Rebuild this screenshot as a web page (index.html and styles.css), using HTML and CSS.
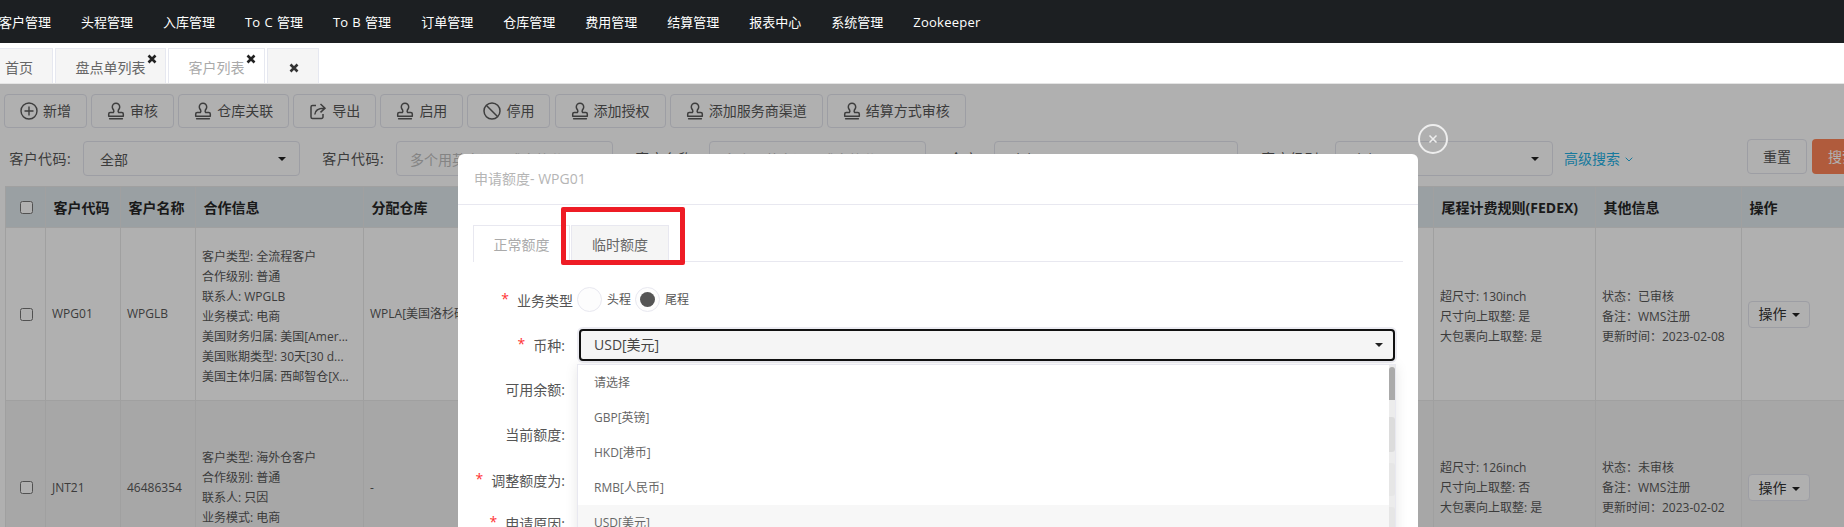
FILE: index.html
```html
<!DOCTYPE html>
<html lang="zh-CN">
<head>
<meta charset="utf-8">
<title>客户列表</title>
<link rel="stylesheet" href="styles.css">
</head>
<body>
<svg class="defs" width="0" height="0" aria-hidden="true">
  <symbol id="stamp" viewBox="0 0 18 18"><path d="M9 1.200a3.700 3.700 0 0 0-3.700 3.700c0 1.500.8 2.300 1.300 3.200.4.800.3 1.700-.2 2.300H3.200c-.9 0-1.500.6-1.500 1.500v2.400h14.600v-2.400c0-.9-.6-1.500-1.500-1.500h-3.200c-.5-.6-.6-1.500-.2-2.300.5-.9 1.300-1.700 1.300-3.200A3.700 3.700 0 0 0 9 1.200zM2.600 16.700h12.800" fill="none" stroke="currentColor" stroke-width="1.500" stroke-linejoin="round" stroke-linecap="round"/></symbol>
  <symbol id="times" viewBox="0 0 10 10"><path d="M1.500 1.500l7 7M8.500 1.500l-7 7" fill="none" stroke="currentColor" stroke-width="2.600"/></symbol>
</svg>

<nav class="nav">
  <a class="nav-item">客户管理</a><a class="nav-item">头程管理</a><a class="nav-item">入库管理</a><a class="nav-item">To C 管理</a><a class="nav-item">To B 管理</a><a class="nav-item">订单管理</a><a class="nav-item">仓库管理</a><a class="nav-item">费用管理</a><a class="nav-item">结算管理</a><a class="nav-item">报表中心</a><a class="nav-item">系统管理</a><a class="nav-item nav-latin">Zookeeper</a>
</nav>

<div class="tabs">
  <div class="tab tab-home">首页</div>
  <div class="tab tab-a">盘点单列表<svg class="tab-x"><use href="#times"/></svg></div>
  <div class="tab tab-b tab-on">客户列表<svg class="tab-x"><use href="#times"/></svg></div>
  <div class="tab tab-c"><svg class="tab-x-solo"><use href="#times"/></svg></div>
</div>

<main class="main">
  <div class="toolbar">
    <button class="btn"><svg class="ico" viewBox="0 0 18 18"><circle cx="9" cy="9" r="8" fill="none" stroke="currentColor" stroke-width="1.400"/><path d="M9 4.500v9M4.500 9h9" stroke="currentColor" stroke-width="1.400"/></svg>新增</button>
    <button class="btn"><svg class="ico"><use href="#stamp"/></svg>审核</button>
    <button class="btn"><svg class="ico"><use href="#stamp"/></svg>仓库关联</button>
    <button class="btn"><svg class="ico" viewBox="0 0 18 18"><path d="M7 3.500H3.500A1.500 1.500 0 0 0 2 5v10a1.500 1.500 0 0 0 1.500 1.500h9A1.500 1.500 0 0 0 14 15v-3M5.800 12.500c.3-4 3-6.300 9.200-6.300M11.500 2l4.500 4.200-4.500 4.200" fill="none" stroke="currentColor" stroke-width="1.500"/></svg>导出</button>
    <button class="btn"><svg class="ico"><use href="#stamp"/></svg>启用</button>
    <button class="btn"><svg class="ico" viewBox="0 0 18 18"><circle cx="9" cy="9" r="8" fill="none" stroke="currentColor" stroke-width="1.500"/><path d="M3.500 3.500l11 11" stroke="currentColor" stroke-width="1.500"/></svg>停用</button>
    <button class="btn"><svg class="ico"><use href="#stamp"/></svg>添加授权</button>
    <button class="btn"><svg class="ico"><use href="#stamp"/></svg>添加服务商渠道</button>
    <button class="btn"><svg class="ico"><use href="#stamp"/></svg>结算方式审核</button>
  </div>

  <div class="filters">
    <label class="f-label">客户代码:</label>
    <div class="control w217"><span>全部</span><i class="caret"></i></div>
    <label class="f-label f-gap">客户代码:</label>
    <div class="control w217 ph"><span>多个用英文逗号或空格分隔</span></div>
    <label class="f-label f-gap">客户名称:</label>
    <div class="control w217 ph"><span>多个用英文逗号或空格分隔</span></div>
    <label class="f-label f-gap f-short">仓库:</label>
    <div class="control w244"><span>全部</span></div>
    <label class="f-label f-gap f-level">客户级别:</label>
    <div class="control w218"><span>全部</span><i class="caret"></i></div>
    <a class="adv">高级搜索<svg class="chev" viewBox="0 0 8 5"><path d="M.7.700L4 4l3.300-3.300" fill="none" stroke="currentColor"/></svg></a>
    <button class="btn-reset">重置</button>
    <button class="btn-search">搜索</button>
  </div>

  <table class="grid">
    <colgroup><col class="c1"><col class="c2"><col class="c3"><col class="c4"><col class="c5"><col class="c6"><col class="c7"><col class="c8"></colgroup>
    <thead>
      <tr><th class="chk"><input type="checkbox"></th><th>客户代码</th><th>客户名称</th><th>合作信息</th><th>分配仓库</th><th>尾程计费规则(FEDEX)</th><th>其他信息</th><th>操作</th></tr>
    </thead>
    <tbody>
      <tr class="row1">
        <td class="chk"><input type="checkbox"></td><td>WPG01</td><td>WPGLB</td>
        <td class="multi">客户类型: 全流程客户<br>合作级别: 普通<br>联系人: WPGLB<br>业务模式: 电商<br>美国财务归属: 美国[Amer...<br>美国账期类型: 30天[30 d...<br>美国主体归属: 西邮智仓[X...</td>
        <td>WPLA[美国洛杉矶仓]</td>
        <td class="multi">超尺寸: 130inch<br>尺寸向上取整: 是<br>大包裹向上取整: 是</td>
        <td class="multi">状态：已审核<br>备注：WMS注册<br>更新时间：2023-02-08</td>
        <td><button class="btn-op">操作<i class="caret"></i></button></td>
      </tr>
      <tr class="row2">
        <td class="chk"><input type="checkbox"></td><td>JNT21</td><td>46486354</td>
        <td>客户类型: 海外仓客户<br>合作级别: 普通<br>联系人: 只因<br>业务模式: 电商</td>
        <td>-</td>
        <td>超尺寸: 126inch<br>尺寸向上取整: 否<br>大包裹向上取整: 是</td>
        <td>状态：未审核<br>备注：WMS注册<br>更新时间：2023-02-02</td>
        <td><button class="btn-op">操作<i class="caret"></i></button></td>
      </tr>
    </tbody>
  </table>
</main>

<div class="backdrop"></div>

<section class="modal">
  <header class="m-head">申请额度- WPG01</header>
  <div class="m-body">
    <div class="m-tabs">
      <div class="m-tab m-tab-on">正常额度</div>
      <div class="m-tab">临时额度</div>
    </div>
    <div class="row row-radio">
      <label class="lab lab-wide"><em>*</em>业务类型</label>
      <span class="radio"></span><span class="radio-text">头程</span>
      <span class="radio radio-on"></span><span class="radio-text">尾程</span>
    </div>
    <div class="row">
      <label class="lab"><em>*</em>币种:</label>
      <div class="select-open">USD[美元]<i class="caret"></i></div>
    </div>
    <div class="row"><label class="lab">可用余额:</label></div>
    <div class="row"><label class="lab">当前额度:</label></div>
    <div class="row"><label class="lab"><em>*</em>调整额度为:</label></div>
    <div class="row row-last"><label class="lab"><em>*</em>申请原因:</label></div>
  </div>
  <div class="drop">
    <ul class="opts">
      <li>请选择</li>
      <li>GBP[英镑]</li>
      <li>HKD[港币]</li>
      <li>RMB[人民币]</li>
      <li class="opt-hi">USD[美元]</li>
    </ul>
    <div class="sbar">
      <div class="sb-thumb"></div>
      <div class="sb-box sb-box1"></div>
      <div class="sb-box sb-box2"></div>
      <div class="sb-box sb-box3"></div>
    </div>
  </div>
  <div class="callout"></div>
</section>

<button class="m-close"><svg viewBox="0 0 10 10"><path d="M1.500 1.500l7 7M8.500 1.500l-7 7" fill="none" stroke="currentColor" stroke-width="1.500"/></svg></button>
</body>
</html>
```
FILE: styles.css
```css
* { box-sizing: border-box; }
html, body { margin: 0; padding: 0; height: 527px; overflow: hidden; }
body { position: relative; background: #fff; color: #575757; font: 14px/20px "Open Sans", "Noto Sans CJK SC", sans-serif; }
.defs { position: absolute; }
button { font: inherit; color: inherit; }

.nav { height: 43px; background: #1c1f22; display: flex; align-items: center; gap: 30px; margin-left: -1px; color: #fff; font-size: 13px; word-spacing: 1px; white-space: nowrap; }
.nav-latin { letter-spacing: .25px; }

.tabs { height: 41px; padding-top: 5px; display: flex; gap: 1.500px; border-bottom: 1px solid #e4e4e4; }
.tab { position: relative; height: 35px; background: #f5f5f5; border: 1px solid #e6e8f0; border-bottom: 0; color: #666; line-height: 37px; white-space: nowrap; }
.tab-home { width: 54px; margin-left: -1px; padding-left: 6px; border-left: 0; }
.tab-a { width: 111.500px; padding-left: 20px; }
.tab-b { width: 97.500px; padding-left: 20px; }
.tab-c { width: 52.500px; }
.tab-on { background: #fff; color: #aaa; }
.tab-x { position: absolute; right: 8px; top: 5px; width: 10px; height: 10px; color: #222; }
.tab-x-solo { position: absolute; left: 21px; top: 14px; width: 10px; height: 10px; color: #333; }

.toolbar { display: flex; gap: 4.100px; padding: 10px 0 0 4px; }
.btn { display: flex; align-items: center; gap: 5px; height: 34px; padding: 0 15px; background: #fff; border: 1px solid #e4e5ee; border-radius: 4px; white-space: nowrap; }
.ico { width: 18px; height: 18px; flex: none; color: #5a5a5a; }

.filters { display: flex; align-items: center; height: 35px; margin-top: 13px; padding-left: 9px; white-space: nowrap; }
.f-label { flex: none; width: 62px; margin-right: 12px; text-align: right; letter-spacing: .4px; }
.f-gap { margin-left: 22px; }
.f-short { width: 34px; }
.f-level { width: 63px; }
.control { position: relative; height: 35px; padding-left: 16px; line-height: 35px; background: #fff; border: 1px solid #e4e5ee; border-radius: 4px; flex: none; }
.w217 { width: 217px; }
.w244 { width: 244px; }
.w218 { width: 218px; }
.ph { padding-left: 13px; color: #c0c0c0; font-size: 14px; }
.caret { display: inline-block; width: 0; height: 0; border: 4px solid transparent; border-top-color: #222; border-bottom: 0; }
.control .caret { position: absolute; right: 13px; top: 15px; }
.adv { margin-left: 11px; color: #22b0e4; }
.chev { width: 8px; height: 5px; margin-left: 5px; vertical-align: 2px; }
.btn-reset { flex: none; width: 60px; height: 35px; margin-left: 114px; margin-top: -4px; background: #fff; border: 1px solid #e4e5ee; border-radius: 4px; }
.btn-search { flex: none; width: 60px; height: 35px; margin-left: 5px; margin-top: -4px; background: #ff8557; border: 0; border-radius: 4px; color: #fff; }

.grid { position: absolute; left: 5px; top: 186px; width: 1839px; table-layout: fixed; border-collapse: collapse; border-top: 1px solid #c6c6c6; font-size: 12px; }
.c1 { width: 40px; } .c2 { width: 75px; } .c3 { width: 75px; } .c4 { width: 168px; } .c5 { width: 1070px; } .c6 { width: 162px; } .c7 { width: 146px; } .c8 { width: 103px; }
.grid th, .grid td { border: 1px solid #e8e8e8; padding: 0 6px; text-align: left; vertical-align: middle; font-weight: 400; white-space: nowrap; overflow: hidden; }
.grid th { height: 41px; padding: 2px 7.500px 0; background: #dfe8ec; color: #262626; font-size: 14px; font-weight: 700; }
.grid td.chk, .grid th.chk { padding: 0 0 0 14px; }
.chk input { display: block; margin: 0; width: 13px; height: 13px; }
.row1 td { height: 173px; background: #fff; }
.row1 td.multi { padding-top: 5px; }
.row2 td { height: 174px; background: #f2f2f2; }
.btn-op { width: 62px; height: 27px; padding: 0; background: #fff; border: 1px solid #e4e5ee; border-radius: 4px; color: #333; font-size: 14px; }
.btn-op .caret { margin-left: 5px; vertical-align: 2px; }

.backdrop { position: absolute; left: 0; right: 0; top: 84px; bottom: 0; background: rgba(0, 0, 0, .31); }

.modal { position: absolute; left: 458px; top: 154px; width: 960px; height: 373px; overflow: hidden; background: #fff; border-radius: 6px 6px 0 0; font-size: 14px; color: #555; }
.m-head { height: 51px; padding-left: 16px; line-height: 50px; border-bottom: 1px solid #e8e8f0; color: #b5b5b5; }
.m-body { padding: 20px 15px 0; }
.m-tabs { display: flex; gap: 1px; height: 37px; border-bottom: 1px solid #e8e8f0; }
.m-tab { width: 98px; height: 37px; text-align: center; line-height: 37px; background: #f5f5f5; border: 1px solid #e8e8f0; border-bottom: 0; color: #666; }
.m-tab-on { width: 97px; background: #fff; color: #aaa; }

.row { display: flex; align-items: center; height: 45px; margin-left: -15px; }
.row-radio { margin-top: 15px; }
.row-last { height: 41px; }
.lab { width: 107px; flex: none; text-align: right; white-space: nowrap; }
.lab-wide { width: 115px; }
.lab em { margin-right: 8px; color: #f33; font-style: normal; vertical-align: 2px; }
.radio { width: 25px; height: 25px; margin-left: 4px; border: 1px solid #e8e8f0; border-radius: 50%; flex: none; position: relative; background: #fdfdfd; }
.radio + .radio-text { margin-left: 5px; }
.radio-on::after { content: ""; position: absolute; left: 4px; top: 4px; width: 15px; height: 15px; border-radius: 50%; background: #555; }
.radio-text { font-size: 12px; }
.select-open { position: relative; flex: none; width: 816px; height: 32px; margin-left: 14px; padding-left: 13px; line-height: 28px; background: #f5f5f5; border: 2px solid #111; border-radius: 4px; box-shadow: 0 0 0 2px #ececf2; color: #444; }
.select-open .caret { position: absolute; right: 10px; top: 12px; }

.drop { position: absolute; left: 119px; top: 210px; width: 819px; height: 190px; display: flex; background: #fff; border: 1px solid #e8e8f0; border-bottom: 0; box-shadow: 0 2px 12px rgba(0, 0, 0, .1); font-size: 12px; }
.opts { list-style: none; margin: 0; padding: 0; flex: 1; }
.opts li { height: 35px; padding-left: 16px; line-height: 35px; color: #666; }
.opts .opt-hi { background: #f7f7f7; }
.sbar { width: 6px; flex: none; background: #ececec; }
.sb-thumb { height: 33px; margin-top: 2px; background: #aaa; border-radius: 3px 3px 0 0; }
.sb-box { border-radius: 0 3px 3px 0; }
.sb-box1 { height: 35px; margin-top: 17px; background: #dcdcdc; }
.sb-box2 { height: 33px; margin-top: 11px; background: #e6e6e6; }
.sb-box3 { height: 35px; margin-top: 11px; background: #e6e6e6; }

.callout { position: absolute; left: 103px; top: 53px; width: 124px; height: 58px; border: 5px solid #ee1c25; border-radius: 2px; }

.m-close { position: absolute; left: 1418px; top: 124px; width: 30px; height: 30px; padding: 8px; background: transparent; border: 2px solid #eee; border-radius: 50%; color: #eee; }
.m-close svg { display: block; width: 10px; height: 10px; }
```
